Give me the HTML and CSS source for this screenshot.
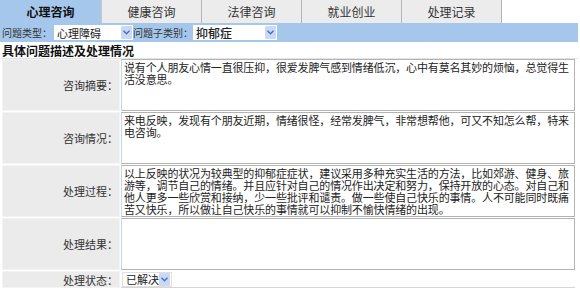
FILE: index.html
```html
<!DOCTYPE html>
<html lang="zh-CN">
<head>
    <meta charset="UTF-8">
    <title>咨询记录</title>
    <link rel="stylesheet" href="styles.css">
</head>
<body>
    <div class="page">
        <!-- 顶部选项卡 -->
        <div class="tabs">
            <div class="tab active">心理咨询</div>
            <div class="tab">健康咨询</div>
            <div class="tab">法律咨询</div>
            <div class="tab">就业创业</div>
            <div class="tab">处理记录</div>
        </div>

        <div class="filter">
            <span class="filter-label">问题类型：</span>
            <div class="fake-select sel-type">
                <span class="sel-text">心理障碍</span>
                <span class="sel-arrow"><svg width="7" height="5" viewBox="0 0 7 5"><path d="M0.5 0.8 L3.5 3.8 L6.5 0.8" fill="none" stroke="#4d6fb3" stroke-width="1.4"/></svg></span>
            </div>
            <span class="filter-label">问题子类别：</span>
            <div class="fake-select sel-sub">
                <span class="sel-text">抑郁症</span>
                <span class="sel-arrow"><svg width="7" height="5" viewBox="0 0 7 5"><path d="M0.5 0.8 L3.5 3.8 L6.5 0.8" fill="none" stroke="#4d6fb3" stroke-width="1.4"/></svg></span>
            </div>
        </div>

        <h2 class="section-title">具体问题描述及处理情况</h2>

        <div class="form-grid">
            <div class="label">咨询摘要：</div>
            <div class="field"><textarea class="area" wrap="off">说有个人朋友心情一直很压抑，很爱发脾气感到情绪低沉，心中有莫名其妙的烦恼，总觉得生
活没意思。</textarea></div>

            <div class="label">咨询情况：</div>
            <div class="field"><textarea class="area" wrap="off">来电反映，发现有个朋友近期，情绪很怪，经常发脾气，非常想帮他，可又不知怎么帮，特来
电咨询。</textarea></div>

            <div class="label">处理过程：</div>
            <div class="field"><textarea class="area" wrap="off">以上反映的状况为较典型的抑郁症症状，建议采用多种充实生活的方法，比如郊游、健身、旅
游等，调节自己的情绪。并且应针对自己的情况作出决定和努力，保持开放的心态。对自己和
他人更多一些欣赏和接纳，少一些批评和谴责。做一些使自己快乐的事情。人不可能同时既痛
苦又快乐，所以做让自己快乐的事情就可以抑制不愉快情绪的出现。</textarea></div>

            <div class="label">处理结果：</div>
            <div class="field"><textarea class="area" wrap="off"></textarea></div>

            <div class="label label-short">处理状态：</div>
            <div class="field field-short">
                <div class="fake-select sel-state">
                    <span class="sel-text">已解决</span>
                    <span class="sel-arrow"><svg width="7" height="5" viewBox="0 0 7 5"><path d="M0.5 0.8 L3.5 3.8 L6.5 0.8" fill="none" stroke="#4d6fb3" stroke-width="1.4"/></svg></span>
                </div>
            </div>
        </div>
    </div>
</body>
</html>
```

FILE: styles.css
```css
body {
    margin: 0;
    background: #fff;
    font-family: "Noto Sans CJK SC", "DejaVu Sans", sans-serif;
    color: #222;
}

.page {
    width: 578px;
}

/* 选项卡 */
.tabs {
    display: flex;
    height: 23px;
}

.tab {
    width: 99px;
    background-color: #ececec;
    border-right: 1px solid #b4b4b4;
    font-size: 12px;
    line-height: 23px;
    text-align: center;
    color: #333;
}

.tab.active {
    width: 101px;
    background-color: #a5c7ec;
    font-weight: bold;
    color: #111;
    border-right-color: #c9c9c9;
}

/* 筛选条 */
.filter {
    display: flex;
    align-items: center;
    height: 19px;
    background-color: #a5c7ec;
    padding-left: 2px;
}

.filter-label {
    font-size: 10px;
    color: #333;
}

.fake-select {
    display: flex;
    align-items: center;
    justify-content: space-between;
    height: 15px;
    background: #fff;
    box-sizing: border-box;
}

.sel-text {
    font-size: 11px;
    padding-left: 3px;
    color: #222;
}

.sel-arrow {
    display: flex;
    align-items: center;
    justify-content: center;
    width: 11px;
    height: 13px;
    margin-right: 1px;
    background: #c9d8f4;
    border-radius: 1px;
}

.sel-type {
    width: 79px;
    margin-left: 2px;
}

.sel-sub {
    width: 84px;
}

.sel-sub .sel-text {
    font-size: 12px;
    font-weight: 500;
}

.section-title {
    margin: 2px 0 0 2px;
    font-size: 12px;
    font-weight: bold;
    line-height: 14px;
    height: 14px;
    color: #111;
}

/* 表单表格 */
.form-grid {
    display: grid;
    grid-template-columns: 118px 1fr;
    gap: 1px;
    border-top: 1px solid #e4e4e4;
    padding: 0 3px 0 2px;
}

.label {
    display: flex;
    align-items: center;
    justify-content: flex-end;
    background-color: #ebebeb;
    border: 1px solid #f4f4f4;
    height: 50px;
    font-size: 11px;
    color: #333;
    padding-right: 1px;
}

.field {
    height: 52px;
}

/* 按原稿手动换行 */
.area {
    display: block;
    width: 100%;
    height: 52px;
    box-sizing: border-box;
    margin: 0;
    border: 1px solid #b3b3b3;
    border-left-color: #c4d7ef;
    padding: 1px 0 0 2px;
    font-family: "Noto Sans CJK SC", sans-serif;
    font-size: 11px;
    letter-spacing: -0.15px;
    line-height: 12px;
    color: #222;
    resize: none;
    overflow: hidden;
}

.label-short {
    height: 15px;
}

.field-short {
    height: 16px;
    border-bottom: 1px solid #d6d6d6;
    display: flex;
    align-items: center;
}

.sel-state {
    width: 50px;
    margin-left: 1px;
    border: 1px solid #e0e0e0;
}
```
